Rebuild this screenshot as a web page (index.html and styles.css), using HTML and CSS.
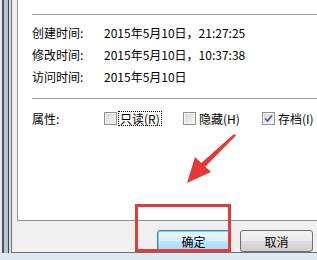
FILE: index.html
```html
<!DOCTYPE html>
<html lang="zh-CN">

<head>
    <meta charset="UTF-8" />
    <title>文件属性</title>
    <link rel="stylesheet" href="styles.css">
</head>

<body>

    <div class="frame"></div>

    <div class="window">
        <div class="panel">
            <div class="sep"></div>

            <div class="rows">
                <div class="row">
                    <span class="label">创建时间:</span>
                    <span class="value">2015年5月10日，21:27:25</span>
                </div>
                <div class="row">
                    <span class="label">修改时间:</span>
                    <span class="value">2015年5月10日，10:37:38</span>
                </div>
                <div class="row">
                    <span class="label">访问时间:</span>
                    <span class="value">2015年5月10日</span>
                </div>
            </div>

            <div class="sep sep-low"></div>

            <div class="row attrs">
                <span class="label">属性:</span>
                <label class="check">
                    <span class="box"></span>
                    <span class="text focus">只读(R)</span>
                </label>
                <label class="check">
                    <span class="box"></span>
                    <span class="text">隐藏(H)</span>
                </label>
                <label class="check">
                    <span class="box">
                        <svg width="9" height="9" viewBox="0 0 9 9">
                            <path d="M1 4.5 L3.5 7 L8 1.5" fill="none" stroke="#4a5a7a" stroke-width="1.6" />
                        </svg>
                    </span>
                    <span class="text">存档(I)</span>
                </label>
            </div>
        </div>

        <div class="buttons">
            <button class="btn btn-default">确定</button>
            <button class="btn">取消</button>
            <button class="btn"></button>
        </div>
    </div>

    <!-- 标注 -->
    <div class="mark"></div>
    <svg class="arrow" width="60" height="60" viewBox="0 0 60 60">
        <polygon points="49,0 51,1.5 18,35 14,31" fill="#e53935" />
        <polygon points="2,49 10,23 26,38" fill="#e53935" />
    </svg>

</body>

</html>
```

FILE: styles.css
```css
body {
    margin: 0;
    width: 317px;
    height: 260px;
    overflow: hidden;
    display: flex;
    background: #dfe8f0;
    font-family: "Noto Sans CJK SC", "Liberation Sans", sans-serif;
    font-size: 12px;
    color: #000;
}

/* 窗口左边框 */
.frame {
    width: 11px;
    height: 253px;
    flex: none;
    background: linear-gradient(to right,
            #e6eaee 0, #e6eaee 2px,
            #50555b 2px, #50555b 4px,
            #b8c5d0 4px, #b8c5d0 8px,
            #40454c 8px, #40454c 9px,
            #d4dbe2 9px, #d4dbe2 11px);
}

.window {
    flex: 1;
    height: 252px;
    background: #f0f0f0;
    border-left: 1px solid #6b7077;
    border-bottom: 1px solid #6b7077;
    padding-left: 5px;
    display: flex;
    flex-direction: column;
}

.panel {
    height: 215px;
    background: #fff;
    border-left: 1px solid #8e9198;
    border-bottom: 1px solid #8e9198;
    padding-left: 14px;
    padding-top: 14px;
}

.sep {
    border-top: 1px solid #a0a0a0;
}

.sep-low {
    margin-top: 11px;
}

.rows {
    padding-top: 6px;
}

.row {
    display: flex;
    align-items: center;
    height: 22px;
}

.label {
    width: 72px;
    flex: none;
}

.attrs {
    margin-top: 8px;
}

.check {
    width: 79px;
    flex: none;
    display: flex;
    align-items: center;
    gap: 2px;
    white-space: nowrap;
}

.box {
    width: 11px;
    height: 11px;
    border: 1px solid #8f8f8f;
    background: linear-gradient(135deg, #d6d6d6, #f6f6f6);
    box-shadow: inset 0 0 0 1px #f4f4f4;
    display: flex;
    align-items: center;
    justify-content: center;
}

.text {
    padding: 0 1px;
    line-height: 13px;
}

.focus {
    outline: 1px dotted #000;
}

.buttons {
    display: flex;
    gap: 10px;
    padding-left: 140px;
    padding-top: 9px;
}

.btn {
    flex: none;
    width: 73px;
    height: 22px;
    padding: 0;
    border: 1px solid #707070;
    border-radius: 3px;
    background: linear-gradient(#f2f2f2 0, #ebebeb 50%, #dddddd 51%, #cfcfcf 100%);
    font-family: inherit;
    font-size: 12px;
    color: #000;
}

.btn-default {
    border-color: #3c7fb1;
    background: linear-gradient(#eaf6fd 0, #d9f0fc 50%, #bee6fd 51%, #a7d9f5 100%);
    box-shadow: inset 0 0 0 1px #7fd0f5;
}

.mark {
    position: absolute;
    left: 135px;
    top: 204px;
    width: 90px;
    height: 42px;
    border: 3px solid #e23b3b;
}

.arrow {
    position: absolute;
    left: 185px;
    top: 134px;
}
```
